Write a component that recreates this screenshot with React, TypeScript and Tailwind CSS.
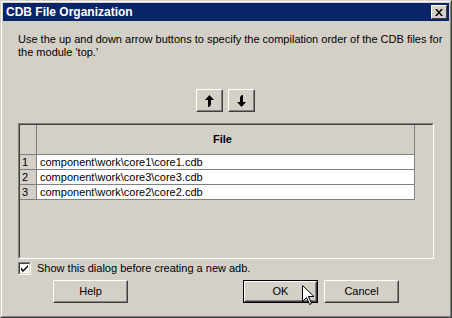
import React from "react";

const font = { fontFamily: '"Liberation Sans", Arial, sans-serif' };

function Btn({ label, def }: { label: string; def?: boolean }) {
  const face = (
    <div className="h-full w-full border border-t-white border-l-white border-r-[#404040] border-b-[#404040]">
      <div className="h-full w-full border border-t-[#d4d0c8] border-l-[#d4d0c8] border-r-[#808080] border-b-[#808080] flex items-center justify-center text-[11px] text-black">
        {label}
      </div>
    </div>
  );
  return (
    <div className={`w-[75px] h-[23px] bg-[#d4d0c8] ${def ? "border border-black" : ""}`}>{face}</div>
  );
}

function ArrowBtn({ down }: { down?: boolean }) {
  return (
    <div className="w-[27px] h-[23px] bg-[#d4d0c8] border border-t-white border-l-white border-r-[#404040] border-b-[#404040]">
      <div className="h-full w-full border border-t-[#d4d0c8] border-l-[#d4d0c8] border-r-[#808080] border-b-[#808080] flex items-center justify-center">
        <svg width="11" height="12" viewBox="0 0 11 12" className={down ? "rotate-180" : ""}>
          <path d="M5.5 0 L10 5 L7 5 L7 9 Q7 11 5 12 L4 12 L4 5 L1 5 Z" fill="#000" />
        </svg>
      </div>
    </div>
  );
}

const rows = ["component\\work\\core1\\core1.cdb", "component\\work\\core3\\core3.cdb", "component\\work\\core2\\core2.cdb"];

export default function App() {
  return (
    <div className="w-[452px] h-[318px] bg-[#d4d0c8] select-none relative" style={font}>
      <div className="h-full w-full border border-t-[#d4d0c8] border-l-[#d4d0c8] border-r-[#404040] border-b-[#404040]">
        <div className="h-full w-full border border-t-white border-l-white border-r-[#808080] border-b-[#808080] p-px flex flex-col">
          {/* title bar */}
          <div className="h-[18px] bg-[#0a246a] flex items-center justify-between pl-[3px] pr-[2px]">
            <span className="text-white font-bold text-[12px]">CDB File Organization</span>
            <div className="w-[16px] h-[14px] bg-[#d4d0c8] border border-t-white border-l-white border-r-[#404040] border-b-[#404040] flex items-center justify-center">
              <svg width="8" height="7" viewBox="0 0 8 7">
                <path d="M0 0 L2 0 L4 2.5 L6 0 L8 0 L5 3.5 L8 7 L6 7 L4 4.5 L2 7 L0 7 L3 3.5 Z" fill="#000" />
              </svg>
            </div>
          </div>

          <div className="flex-1 pl-[15px] pr-[15px] pt-[12px] flex flex-col">
            <p className="text-[11px] leading-[13px] text-black whitespace-nowrap">
              Use the up and down arrow buttons to specify the compilation order of the CDB files for
              <br />
              the module 'top.'
            </p>

            <div className="flex justify-center gap-[5px] mt-[30px] pr-[2px]">
              <ArrowBtn />
              <ArrowBtn down />
            </div>

            {/* grid */}
            <div className="mt-[11px] w-[416px] h-[136px] border border-t-[#808080] border-l-[#808080] border-r-white border-b-white">
              <div className="h-full w-full border border-t-[#404040] border-l-[#404040] border-r-[#d4d0c8] border-b-[#d4d0c8] bg-[#d4d0c8]">
                <div className="w-[395px]">
                  <div className="flex h-[30px] border-b border-[#808080]">
                    <div className="w-[17px] border-r border-[#808080]" />
                    <div className="flex-1 border-r border-[#808080] flex items-center justify-center font-bold text-[11px] pr-[6px]">File</div>
                  </div>
                  {rows.map((r, i) => (
                    <div key={i} className="flex h-[15px] border-b border-[#808080] text-[11px]">
                      <div className="w-[17px] border-r border-[#808080] pl-[2px] leading-[14px]">{i + 1}</div>
                      <div className="flex-1 bg-white border-r border-[#808080] pl-[3px] leading-[14px]">{r}</div>
                    </div>
                  ))}
                </div>
              </div>
            </div>

            <div className="flex items-center mt-[3px] h-[13px]">
              <div className="w-[13px] h-[13px] border border-t-[#808080] border-l-[#808080] border-r-white border-b-white">
                <div className="w-full h-full border border-t-[#404040] border-l-[#404040] border-r-[#d4d0c8] border-b-[#d4d0c8] bg-white flex items-center justify-center">
                  <svg width="7" height="7" viewBox="0 0 7 7">
                    <path d="M0 2 L0 5 L2 7 L7 2 L7 0 L2 5 Z" fill="#000" />
                  </svg>
                </div>
              </div>
              <span className="ml-[6px] text-[11px]">Show this dialog before creating a new adb.</span>
            </div>

            <div className="flex mt-[5px]">
              <div className="ml-[35px]"><Btn label="Help" /></div>
              <div className="ml-[115px]"><Btn label="OK" def /></div>
              <div className="ml-[6px]"><Btn label="Cancel" /></div>
            </div>
          </div>
        </div>
      </div>

      {/* mouse cursor */}
      <svg className="absolute left-[302px] top-[285px]" width="13" height="21" viewBox="0 0 13 21">
        <path d="M0.5 0.5 L0.5 16.5 L4.5 12.5 L7.5 19.5 L9.5 18.5 L6.5 11.5 L12 11.5 Z" fill="#fff" stroke="#000" strokeWidth="1" />
      </svg>
    </div>
  );
}
